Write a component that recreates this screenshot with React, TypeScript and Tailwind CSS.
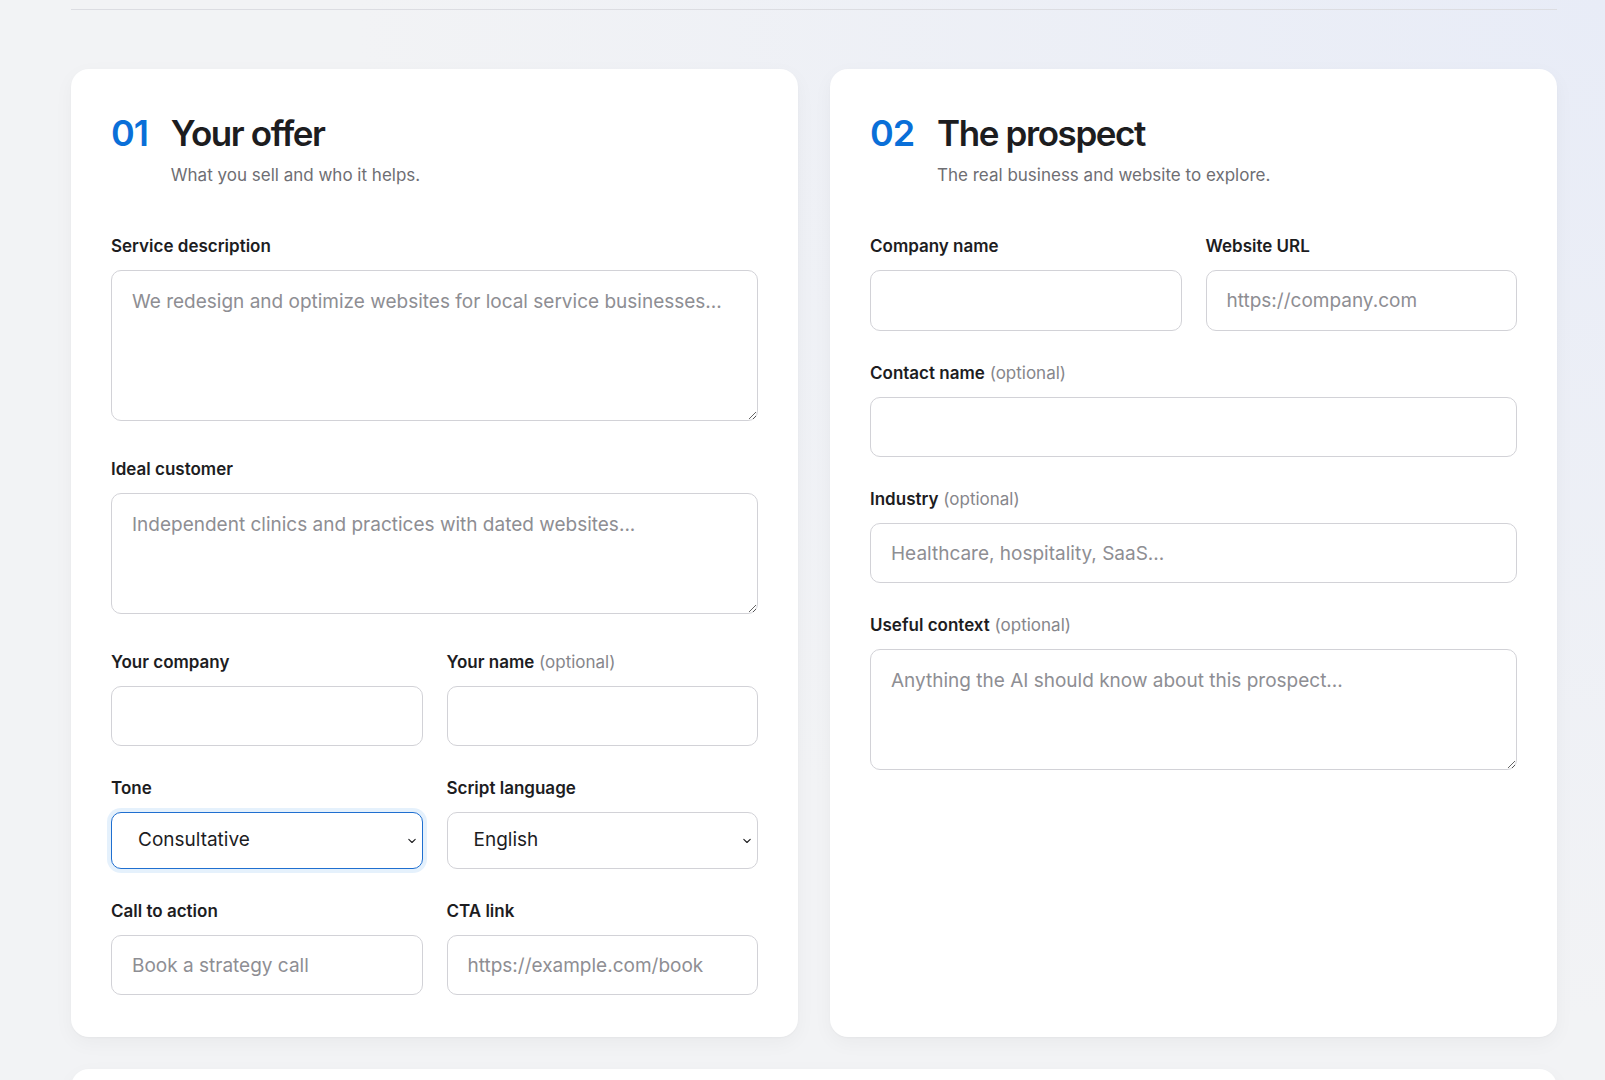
import React from "react";

function Label({ text, optional }: { text: string; optional?: boolean }) {
  return (
    <label className="block text-[17px] leading-6 font-semibold text-[#1d1d1f] mb-3">
      {text}
      {optional && <span className="font-normal text-[#86868b]"> (optional)</span>}
    </label>
  );
}

const inputCls =
  "block w-full h-[60px] rounded-[10px] border border-[#d2d2d7] bg-white px-5 text-[19px] text-[#1d1d1f] placeholder:text-[#8e8e93] outline-none";
const areaCls =
  "block w-full rounded-[10px] border border-[#d2d2d7] bg-white px-5 py-4 text-[19px] leading-[30px] text-[#1d1d1f] placeholder:text-[#8e8e93] outline-none";

function Chevron() {
  return (
    <svg
      className="pointer-events-none absolute right-[6px] top-1/2 -translate-y-1/2"
      width="10"
      height="6"
      viewBox="0 0 10 6"
      fill="none"
    >
      <path d="M1.8 1.3 5 4.5 8.2 1.3" stroke="#1d1d1f" strokeWidth="1.1" strokeLinecap="round" strokeLinejoin="round" />
    </svg>
  );
}

function Select({ value, options, focused }: { value: string; options: string[]; focused?: boolean }) {
  return (
    <div className="relative">
      <select
        defaultValue={value}
        className={
          "block w-full h-[57px] appearance-none rounded-[10px] border bg-white pl-[26px] pr-8 text-[19px] text-[#1d1d1f] outline-none " +
          (focused
            ? "border-[#1f6fd0] ring-4 ring-[#0071e3]/10"
            : "border-[#d2d2d7]")
        }
      >
        {options.map((o) => (
          <option key={o}>{o}</option>
        ))}
      </select>
      <Chevron />
    </div>
  );
}

function Header({ num, title, sub }: { num: string; title: string; sub: string }) {
  return (
    <div className="flex gap-[23px] mb-[47px]">
      <span className="text-[36px] leading-[40px] font-semibold tracking-[-0.03em] text-[#0a6fd8]">{num}</span>
      <div>
        <h2 className="text-[35px] leading-[40px] font-semibold tracking-[-0.04em] text-[#1d1d1f]">{title}</h2>
        <p className="mt-[10px] text-[17px] leading-6 text-[#6e6e73]">{sub}</p>
      </div>
    </div>
  );
}

const cardCls =
  "rounded-[18px] bg-white px-10 pt-[44px] pb-[42px] shadow-[0_1px_2px_rgba(0,0,0,0.03),0_6px_20px_rgba(0,0,0,0.04)]";

export default function App() {
  return (
    <div className="min-h-screen w-full bg-[#f2f3f5] bg-[radial-gradient(ellipse_at_top_right,#e8ecf7_0%,rgba(242,243,245,0)_55%)] font-['Inter','Liberation_Sans',sans-serif] antialiased">
      <div className="pl-[71px] pr-[48px] pb-10">
        <div className="h-[10px] border-b border-[#dcdde2]" />
        <div className="mt-[59px] grid grid-cols-2 gap-8">
          <section className={cardCls}>
            <Header num="01" title="Your offer" sub="What you sell and who it helps." />
            <div className="flex flex-col gap-[30px]">
              <div className="pb-[6px]">
                <Label text="Service description" />
                <textarea
                  className={areaCls + " h-[151px]"}
                  placeholder="We redesign and optimize websites for local service businesses..."
                />
              </div>
              <div className="pb-[6px]">
                <Label text="Ideal customer" />
                <textarea
                  className={areaCls + " h-[121px]"}
                  placeholder="Independent clinics and practices with dated websites..."
                />
              </div>
              <div className="grid grid-cols-2 gap-6">
                <div>
                  <Label text="Your company" />
                  <input className={inputCls} />
                </div>
                <div>
                  <Label text="Your name" optional />
                  <input className={inputCls} />
                </div>
              </div>
              <div className="grid grid-cols-2 gap-6">
                <div>
                  <Label text="Tone" />
                  <Select value="Consultative" options={["Consultative", "Friendly", "Direct", "Formal"]} focused />
                </div>
                <div>
                  <Label text="Script language" />
                  <Select value="English" options={["English", "Spanish", "French", "German"]} />
                </div>
              </div>
              <div className="grid grid-cols-2 gap-6">
                <div>
                  <Label text="Call to action" />
                  <input className={inputCls} placeholder="Book a strategy call" />
                </div>
                <div>
                  <Label text="CTA link" />
                  <input className={inputCls} placeholder="https://example.com/book" />
                </div>
              </div>
            </div>
          </section>
          <section className={cardCls}>
            <Header num="02" title="The prospect" sub="The real business and website to explore." />
            <div className="flex flex-col gap-[30px]">
              <div className="grid grid-cols-2 gap-6">
                <div>
                  <Label text="Company name" />
                  <input className={inputCls + " h-[61px]"} />
                </div>
                <div>
                  <Label text="Website URL" />
                  <input className={inputCls + " h-[61px]"} placeholder="https://company.com" />
                </div>
              </div>
              <div>
                <Label text="Contact name" optional />
                <input className={inputCls} />
              </div>
              <div>
                <Label text="Industry" optional />
                <input className={inputCls} placeholder="Healthcare, hospitality, SaaS..." />
              </div>
              <div>
                <Label text="Useful context" optional />
                <textarea
                  className={areaCls + " h-[121px]"}
                  placeholder="Anything the AI should know about this prospect..."
                />
              </div>
            </div>
          </section>
        </div>
        <div className="mt-8 h-[200px] rounded-[18px] bg-white shadow-[0_1px_2px_rgba(0,0,0,0.03),0_6px_20px_rgba(0,0,0,0.04)]" />
      </div>
    </div>
  );
}
